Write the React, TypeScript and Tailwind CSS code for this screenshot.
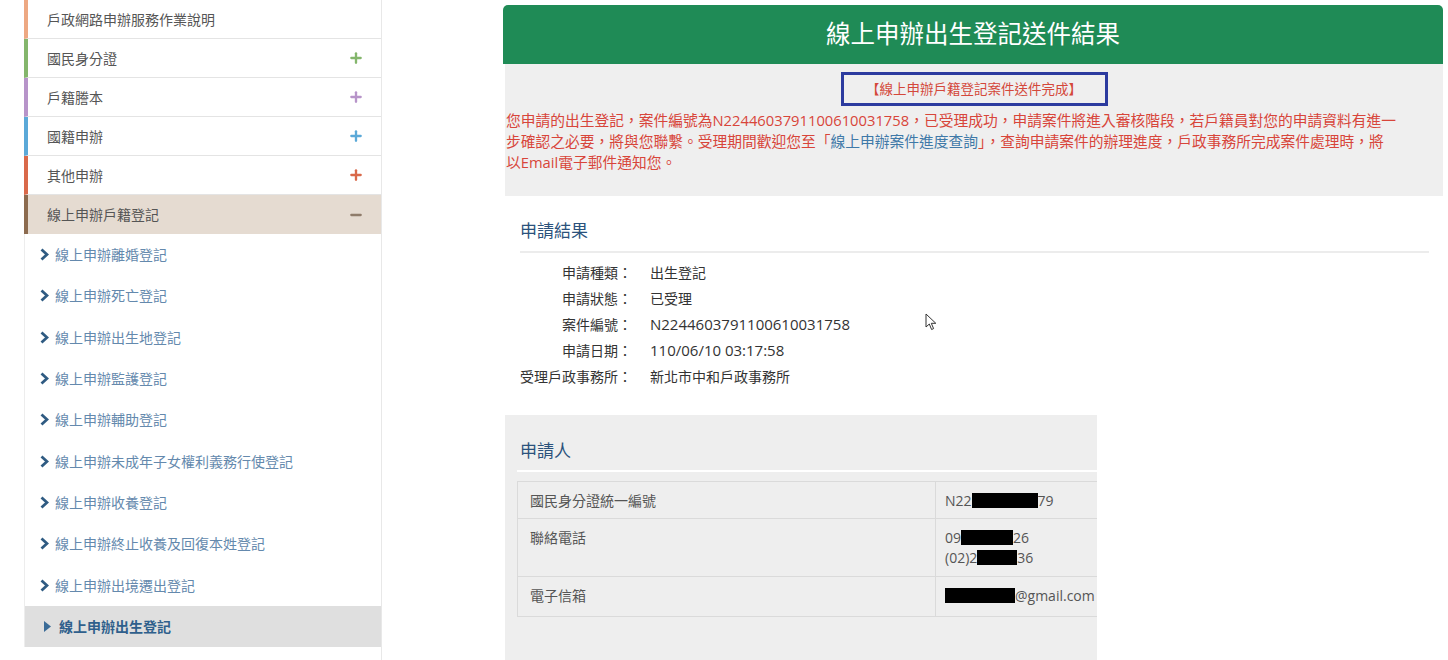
import { Plus, Minus } from "lucide-react";

const font = { fontFamily: '"Open Sans", "Noto Sans CJK TC", sans-serif' };

const topItems = [
  { label: "戶政網路申辦服務作業說明", bar: "border-l-[#eda882]", icon: null, iconColor: "" },
  { label: "國民身分證", bar: "border-l-[#84b66c]", icon: "plus", iconColor: "text-[#84b66c]" },
  { label: "戶籍謄本", bar: "border-l-[#b794c9]", icon: "plus", iconColor: "text-[#b794c9]" },
  { label: "國籍申辦", bar: "border-l-[#5ba9d8]", icon: "plus", iconColor: "text-[#5ba9d8]" },
  { label: "其他申辦", bar: "border-l-[#d9694a]", icon: "plus", iconColor: "text-[#d9694a]" },
];

const subItems = [
  "線上申辦離婚登記",
  "線上申辦死亡登記",
  "線上申辦出生地登記",
  "線上申辦監護登記",
  "線上申辦輔助登記",
  "線上申辦未成年子女權利義務行使登記",
  "線上申辦收養登記",
  "線上申辦終止收養及回復本姓登記",
  "線上申辦出境遷出登記",
];

// latin values are drawn a touch wider than the CJK ones
const results: [string, string, boolean][] = [
  ["申請種類：", "出生登記", false],
  ["申請狀態：", "已受理", false],
  ["案件編號：", "N2244603791100610031758", true],
  ["申請日期：", "110/06/10 03:17:58", true],
  ["受理戶政事務所：", "新北市中和戶政事務所", false],
];

function Chevron() {
  return (
    <svg width="9" height="13" viewBox="0 0 9 13" className="shrink-0">
      <path d="M1.5 1.5 L7 6.5 L1.5 11.5" fill="none" stroke="#2f5b82" strokeWidth="2.8" />
    </svg>
  );
}

function Redact({ w }: { w: number }) {
  return <span className="inline-block h-[15px] bg-black align-[-2px]" style={{ width: w }} />;
}

export default function App() {
  return (
    <div className="w-[1448px] h-[660px] overflow-hidden bg-white flex relative" style={font}>
      {/* sidebar */}
      <aside className="ml-[24px] w-[358px] shrink-0 flex flex-col border-r border-[#e8e8e8]">
        {topItems.map((it) => (
          <div
            key={it.label}
            className={`h-[39px] flex items-center justify-between border-l-[4px] ${it.bar} border-b border-b-[#e4e4e4] pl-[19px] pr-[17px] text-[14px] text-[#555]`}
          >
            <span>{it.label}</span>
            {it.icon && <Plus size={16} strokeWidth={3.5} className={it.iconColor} />}
          </div>
        ))}
        <div className="h-[39px] flex items-center justify-between border-l-[4px] border-l-[#8c6b4f] bg-[#e5dbd1] pl-[19px] pr-[17px] text-[14px] text-[#555]">
          <span>線上申辦戶籍登記</span>
          <Minus size={16} strokeWidth={3.5} className="text-[#8f7c6b]" />
        </div>
        <div className="flex flex-col border-l border-[#ededed]">
          {subItems.map((s) => (
            <div key={s} className="h-[41.3px] flex items-center gap-[6px] pl-[15px] text-[14px] text-[#6489ad]">
              <Chevron />
              <span>{s}</span>
            </div>
          ))}
          <div className="h-[41.3px] flex items-center gap-[8px] pl-[19px] bg-[#dfdfdf] text-[14px] font-semibold text-[#2f5f8c]">
            <svg width="7" height="11" viewBox="0 0 7 11">
              <path d="M0 0 L7 5.5 L0 11 Z" fill="#3a6b97" />
            </svg>
            <span>線上申辦出生登記</span>
          </div>
        </div>
      </aside>

      {/* main */}
      <main className="ml-[121px] w-[940px] shrink-0 pt-[5px] flex flex-col">
        <div className="h-[59px] bg-[#1f8b56] rounded-t-[5px] flex items-center justify-center text-white text-[24.5px]">
          線上申辦出生登記送件結果
        </div>

        <div className="h-[132px] bg-[#efefef] ml-[2px] pt-[8px]">
          <div className="mx-auto w-[267px] h-[34px] border-[3px] border-[#2c3b9f] flex items-center justify-center text-[13.5px] text-[#d4483a]">
            【線上申辦戶籍登記案件送件完成】
          </div>
          <p className="mt-[4px] px-[1px] text-[14.75px] leading-[21px] text-[#d8453a] whitespace-nowrap">
            您申請的出生登記，案件編號為N2244603791100610031758，已受理成功，申請案件將進入審核階段，若戶籍員對您的申請資料有進一
            <br />
            步確認之必要，將與您聯繫。受理期間歡迎您至「<span className="text-[#3f79a8]">線上申辦案件進度查詢</span>」，查詢申請案件的辦理進度，戶政事務所完成案件處理時，將
            <br />
            以Email電子郵件通知您。
          </p>
        </div>

        <section className="h-[219px] ml-[2px] pt-[23px] pl-[15px] relative">
          <h2 className="text-[17px] leading-[24px] text-[#2b527c]">申請結果</h2>
          <div className="mt-[8px] mr-[14px] h-[2px] bg-[#ececec]" />
          <div className="mt-[6px] flex flex-col text-[14px] text-[#333]">
            {results.map(([k, v, latin]) => (
              <div key={k} className="h-[26px] flex items-center">
                <span className="w-[112px] text-right">{k}</span>
                <span className={latin ? "ml-[18px] text-[15px]" : "ml-[18px]"}>{v}</span>
              </div>
            ))}
          </div>
          <svg width="12" height="18" viewBox="0 0 12 18" className="absolute left-[420px] top-[117px]">
            <path d="M1 1 L1 14 L4.3 11 L6.6 16.5 L8.6 15.6 L6.3 10.3 L10.8 10.3 Z" fill="white" stroke="#333" strokeWidth="1" strokeLinejoin="round" />
          </svg>
        </section>

        <section className="w-[592px] h-[245px] ml-[2px] bg-[#eeeeee] overflow-hidden pt-[24px]">
          <h2 className="pl-[15px] text-[17px] leading-[24px] text-[#2b527c]">申請人</h2>
          <div className="mt-[7px] ml-[12px] h-[2px] bg-white" />
          <div className="mt-[9px] ml-[12px] w-[720px] border-t border-l border-[#dadada] text-[14px] text-[#555]">
            <div className="flex h-[37px] border-b border-[#dadada]">
              <div className="w-[418px] border-r border-[#dadada] pl-[12px] pt-[9px] leading-[20px]">國民身分證統一編號</div>
              <div className="pl-[9px] pt-[9px] leading-[20px] whitespace-nowrap">
                N22<Redact w={66} />79
              </div>
            </div>
            <div className="flex h-[58px] border-b border-[#dadada]">
              <div className="w-[418px] border-r border-[#dadada] pl-[12px] pt-[9px] leading-[20px]">聯絡電話</div>
              <div className="pl-[9px] pt-[9px] leading-[20px] whitespace-nowrap">
                <div>
                  09<Redact w={52} />26
                </div>
                <div>
                  (02)2<Redact w={40} />36
                </div>
              </div>
            </div>
            <div className="flex h-[40px] border-b border-[#dadada]">
              <div className="w-[418px] border-r border-[#dadada] pl-[12px] pt-[9px] leading-[20px]">電子信箱</div>
              <div className="pl-[9px] pt-[9px] leading-[20px] whitespace-nowrap">
                <Redact w={70} />@gmail.com
              </div>
            </div>
          </div>
        </section>
      </main>
    </div>
  );
}
